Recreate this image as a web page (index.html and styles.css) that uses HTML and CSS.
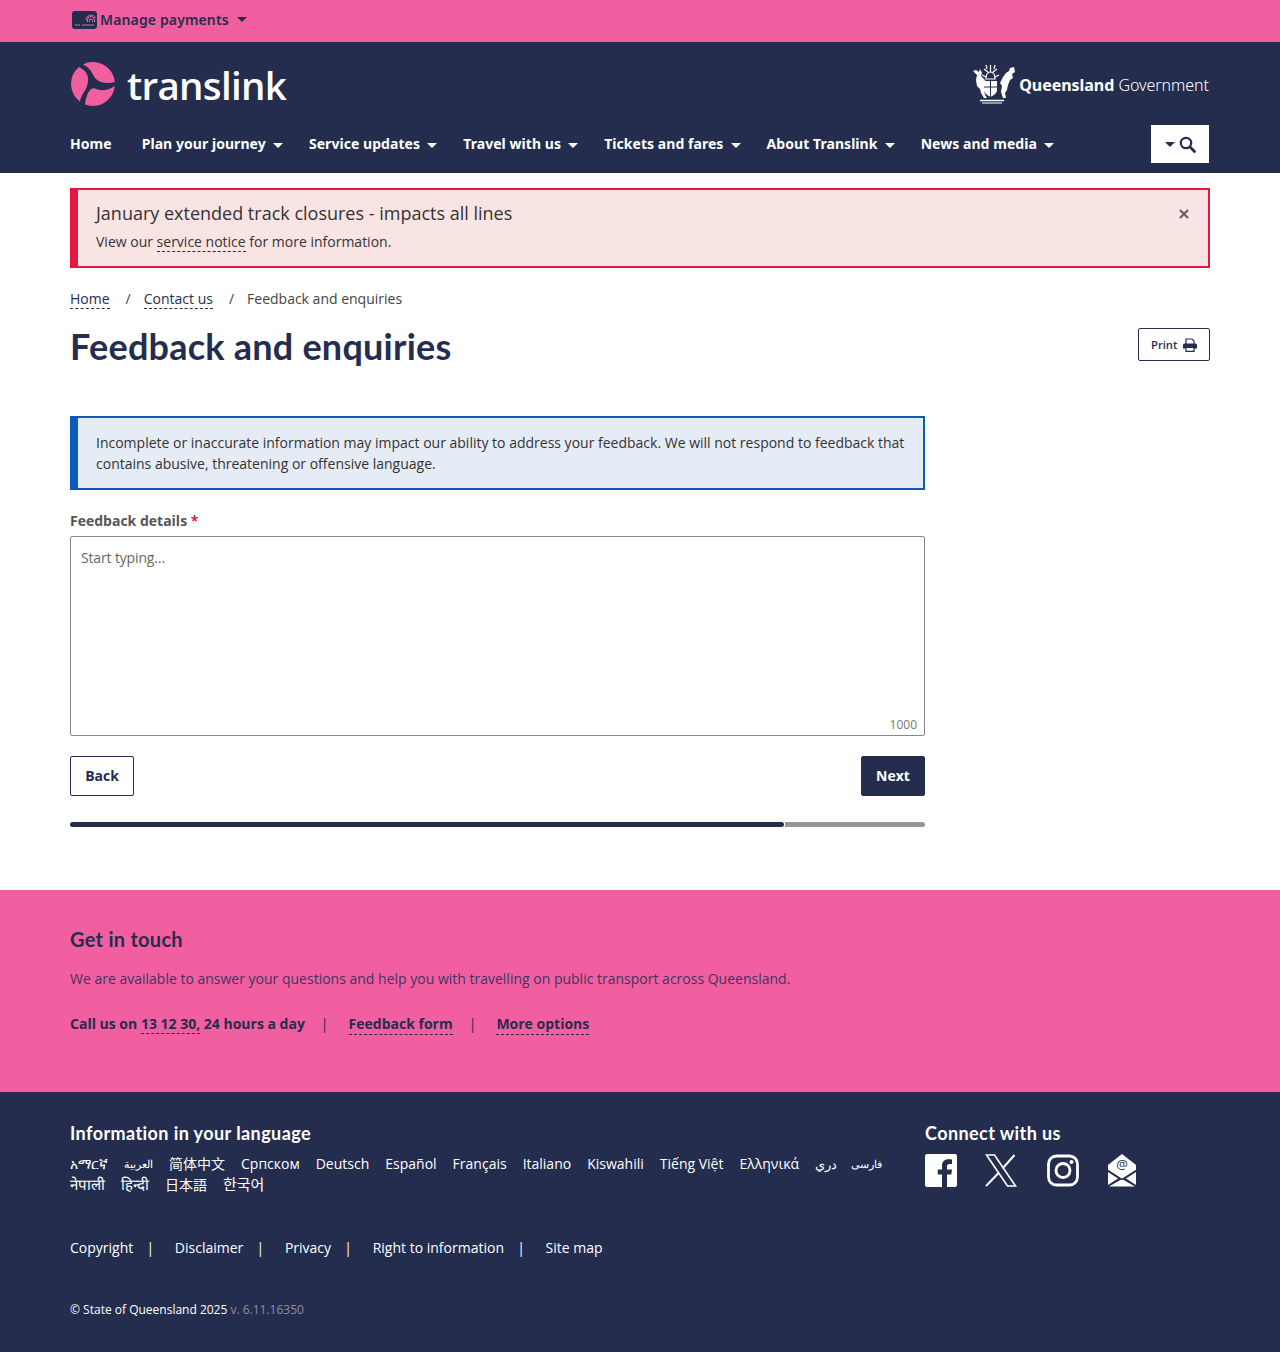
FILE: index.html
```html
<!DOCTYPE html>
<html lang="en">
<head>
    <meta charset="UTF-8">
    <meta name="viewport" content="width=device-width, initial-scale=1.0">
    <title>Feedback and enquiries</title>
    <link rel="stylesheet" href="styles.css">
</head>
<body>

    <!-- Top pink bar -->
    <div class="topbar">
        <div class="container">
            <a class="manage" href="#">
                <svg class="card-icon" width="25" height="18" viewBox="0 0 25 18">
                    <rect x="0" y="0" width="25" height="18" rx="3" fill="#252d4f"/>
                    <rect x="3" y="13.500" width="5" height="1" fill="#f15fa0"/>
                    <rect x="10" y="13.500" width="12" height="1" fill="#f15fa0"/>
                    <path d="M17.500 11V9.500a1.500 1.500 0 0 1 3 0V11M15.500 11V9a3.500 3.500 0 0 1 7 0v2M14 9a5 5 0 0 1 9.500-2" fill="none" stroke="#f15fa0" stroke-width="1"/>
                </svg>
                <span>Manage payments</span>
                <span class="caret"></span>
            </a>
        </div>
    </div>

    <!-- Header and navigation -->
    <header class="header">
        <div class="container">
            <div class="brand-row">
                <a class="logo" href="#">
                    <svg width="44" height="44" viewBox="0 0 44 44" fill="#f15fa0">
                        <path d="M12 2.400A22 22 0 0 1 43.900 20C36 22 29 21 25 17C21 13 21 6 12 2.400Z"/>
                        <path d="M8 5C16 9 19 15 16 24C14 30 10 33 9 39.700A22 22 0 0 1 8 5Z"/>
                        <path d="M43.800 24C36 29 29 29 24 26.500C19 25 15 33 14 42.500A22 22 0 0 0 43.800 24Z"/>
                    </svg>
                    <span class="logo-text">translink</span>
                </a>
                <a class="qld" href="#">
                    <svg width="44" height="42" viewBox="0 0 44 42">
                        <path fill="#fff" d="M1 8l3-1 3 2 1-3 2 4-1 3 3 3 3 4-1 5-2 2 1 5 2 3h-3l-3-5-1-4-3-3-1-6 1-5-3-3z"/>
                        <path fill="#fff" d="M42 4l1 5-3 2 1 4-3 2-2 5-1 5-2 3 1 5h-3l-2-6 1-6-2-3 3-6 3-4 3-2 1-3z"/>
                        <path fill="#fff" d="M12 18h13v9c0 3-3 5-6.500 7C15 32 12 30 12 27z"/>
                        <path d="M18.500 18v16M12 24h13" stroke="#252d4f" stroke-width="1"/>
                        <path fill="none" stroke="#fff" stroke-width="1.200" d="M14 16c0-5 2-7 4.500-7s4.500 2 4.500 7zM18.500 9V2M12 6l4 3M25 6l-4 3M10 12l4 2M27 12l-4 2M14 2l1 4M23 2l-1 4"/>
                        <path d="M8 37.500h24" stroke="#fff" stroke-width="1.500"/>
                        <path d="M10 40h20" stroke="#fff" stroke-width="1"/>
                    </svg>
                    <span class="qld-text"><b>Queensland</b> Government</span>
                </a>
            </div>
            <nav class="nav">
                <ul class="nav-list">
                    <li class="home"><a href="#">Home</a></li>
                    <li><a href="#">Plan your journey <span class="caret"></span></a></li>
                    <li><a href="#">Service updates <span class="caret"></span></a></li>
                    <li><a href="#">Travel with us <span class="caret"></span></a></li>
                    <li><a href="#">Tickets and fares <span class="caret"></span></a></li>
                    <li><a href="#">About Translink <span class="caret"></span></a></li>
                    <li><a href="#">News and media <span class="caret"></span></a></li>
                </ul>
                <button class="search-btn">
                    <span class="caret"></span>
                    <svg width="17" height="17" viewBox="0 0 17 17" fill="none" stroke="#252d4f">
                        <circle cx="7" cy="7" r="5.200" stroke-width="2.200"/>
                        <path d="M11 11l4.500 4.500" stroke-width="2.800" stroke-linecap="round"/>
                    </svg>
                </button>
            </nav>
        </div>
    </header>

    <main class="container main">
        <!-- Alert -->
        <div class="alert">
            <div>
                <p class="alert-title">January extended track closures - impacts all lines</p>
                <p class="alert-text">View our <a href="#">service notice</a> for more information.</p>
            </div>
            <svg class="alert-close" width="10" height="10" viewBox="0 0 10 10" stroke="#6b5f5f" stroke-width="2.200">
                <path d="M1 1l8 8M9 1l-8 8"/>
            </svg>
        </div>

        <ol class="breadcrumb">
            <li><a href="#">Home</a></li>
            <li class="sep">/</li>
            <li><a href="#">Contact us</a></li>
            <li class="sep">/</li>
            <li>Feedback and enquiries</li>
        </ol>

        <div class="title-row">
            <h1>Feedback and enquiries</h1>
            <button class="print-btn">Print
                <svg width="14" height="14" viewBox="0 0 14 14">
                    <path d="M3 6V1h6l2 2v3" fill="none" stroke="#252d4f" stroke-width="1.200"/>
                    <path d="M1.500 5.500h11a1.500 1.500 0 0 1 1.500 1.500v3.500h-14V7a1.500 1.500 0 0 1 1.500-1.500z" fill="#252d4f"/>
                    <path d="M3 9.500h8V13.400H3z" fill="#fff" stroke="#252d4f" stroke-width="1.200"/>
                </svg>
            </button>
        </div>

        <section class="form-col">
            <div class="info">
                Incomplete or inaccurate information may impact our ability to address your feedback. We will not respond to feedback that contains abusive, threatening or offensive language.
            </div>

            <label class="field-label" for="details">Feedback details <span class="req">*</span></label>
            <div class="textarea-wrap">
                <textarea id="details" placeholder="Start typing…"></textarea>
                <span class="counter">1000</span>
            </div>

            <div class="actions">
                <button class="btn btn-back">Back</button>
                <button class="btn btn-next">Next</button>
            </div>

            <div class="progress">
                <div class="progress-done"></div>
                <div class="progress-left"></div>
            </div>
        </section>
    </main>

    <!-- Get in touch -->
    <section class="touch">
        <div class="container">
            <h2>Get in touch</h2>
            <p class="touch-text">We are available to answer your questions and help you with travelling on public transport across Queensland.</p>
            <div class="touch-links">
                <span>Call us on <a href="#">13 12 30,</a> 24 hours a day</span>
                <span class="pipe">|</span>
                <a href="#">Feedback form</a>
                <span class="pipe">|</span>
                <a href="#">More options</a>
            </div>
        </div>
    </section>

    <!-- Footer -->
    <footer class="footer">
        <div class="container">
            <div class="footer-top">
                <div class="lang-col">
                    <h3>Information in your language</h3>
                    <ul class="lang-list">
                        <li>አማርኛ</li>
                        <li class="lang-ar">العربية</li>
                        <li class="lang-zh">简体中文</li>
                        <li>Српском</li>
                        <li>Deutsch</li>
                        <li>Español</li>
                        <li>Français</li>
                        <li>Italiano</li>
                        <li>Kiswahili</li>
                        <li>Tiếng Việt</li>
                        <li>Ελληνικά</li>
                        <li class="lang-prs">دري</li>
                        <li class="lang-fa">فارسی</li>
                        <li class="lang-hi">नेपाली</li>
                        <li class="lang-hi">हिन्दी</li>
                        <li class="lang-ja">日本語</li>
                        <li class="lang-ko">한국어</li>
                    </ul>
                </div>
                <div class="connect-col">
                    <h3>Connect with us</h3>
                    <div class="social">
                        <svg width="32" height="33" viewBox="0 0 32 33">
                            <path fill="#fff" d="M2 0h28a2 2 0 0 1 2 2v29a2 2 0 0 1-2 2h-8V20.500h4.300l.7-5H22v-3c0-1.500.5-2.500 2.500-2.500H27V5.500c-.5 0-2-.2-3.700-.2-3.700 0-6.300 2.300-6.300 6.400v3.800h-4.300v5H17V33H2a2 2 0 0 1-2-2V2a2 2 0 0 1 2-2z"/>
                        </svg>
                        <svg width="32" height="33" viewBox="0 0 32 33" fill="none" stroke="#fff">
                            <path d="M1.500 1h8L30.500 32h-8z" stroke-width="1.600"/>
                            <path d="M29.500 1L17.500 14.500M14 18.500L1 32" stroke-width="2"/>
                        </svg>
                        <svg class="insta" width="32" height="33" viewBox="0 0 32 33" fill="none" stroke="#fff">
                            <rect x="1.500" y="2" width="29" height="29" rx="8" stroke-width="2.800"/>
                            <circle cx="16" cy="16.500" r="7" stroke-width="2.800"/>
                            <circle cx="24.500" cy="8" r="2" fill="#fff" stroke="none"/>
                        </svg>
                        <svg width="30" height="33" viewBox="0 0 30 33">
                            <path fill="#fff" d="M15 0L29 11V16L15 25 1 16V11z"/>
                            <path fill="#fff" d="M1 18L11 24.500 1 31zM29 18L19 24.500 29 31zM2 32.500L15 25 28 32.500z"/>
                            <path d="M1 16.500L15 25.500 29 16.500" fill="none" stroke="#252d4f" stroke-width="1.200"/>
                            <text x="15" y="15" text-anchor="middle" class="mail-at">@</text>
                        </svg>
                    </div>
                </div>
            </div>

            <ul class="legal">
                <li><a href="#">Copyright</a></li>
                <li><a href="#">Disclaimer</a></li>
                <li><a href="#">Privacy</a></li>
                <li><a href="#">Right to information</a></li>
                <li class="last"><a href="#">Site map</a></li>
            </ul>

            <p class="copy">© State of Queensland 2025 <span class="version">v. 6.11.16350</span></p>
        </div>
    </footer>

</body>
</html>
```
FILE: styles.css
```css
* {
    box-sizing: border-box;
}

body {
    font-family: "Open Sans", Arial, sans-serif;
    font-size: 14px;
    color: #252d4f;
    background-color: #fff;
    margin: 0;
}

a {
    color: inherit;
    text-decoration: none;
}

p, ul, ol, h1, h2, h3 {
    margin: 0;
    padding: 0;
}

ul, ol {
    list-style: none;
}

.container {
    width: 1140px;
    margin-left: 70px;
}

.caret {
    display: inline-block;
    width: 0;
    height: 0;
    border-left: 5px solid transparent;
    border-right: 5px solid transparent;
    border-top: 5px solid currentColor;
    vertical-align: middle;
}

/* top bar */
.topbar {
    background-color: #f15fa0;
    height: 42px;
}

.topbar .container {
    padding-left: 2px;
}

.manage {
    display: inline-flex;
    align-items: center;
    height: 39px;
    gap: 3px;
    font-family: "Noto Sans", sans-serif;
    font-size: 14px;
    font-weight: 600;
    letter-spacing: 0.14px;
}

.manage .caret {
    margin-left: 5px;
}

/* header */
.header {
    background-color: #252d4f;
    height: 131px;
    color: #fff;
}

.brand-row {
    display: flex;
    justify-content: space-between;
    align-items: center;
    height: 83px;
}

.logo {
    display: flex;
    align-items: center;
    gap: 12px;
    margin-left: 1px;
}

.logo-text {
    font-family: "Open Sans", sans-serif;
    font-size: 38.5px;
    font-weight: 600;
    letter-spacing: -0.7px;
    line-height: 44px;
    padding-top: 2px;
}

.qld {
    display: flex;
    align-items: center;
    gap: 3px;
    margin-right: 1px;
}

.qld-text {
    font-family: "Noto Sans", sans-serif;
    font-size: 16px;
    font-weight: 300;
    letter-spacing: -0.04px;
    white-space: nowrap;
    padding-top: 2px;
}

.qld-text b {
    font-weight: 700;
}

.nav {
    display: flex;
    justify-content: space-between;
    align-items: flex-start;
}

.nav-list {
    display: flex;
    gap: 26px;
    font-family: "Noto Sans", sans-serif;
    font-size: 14px;
    font-weight: 700;
    letter-spacing: 0.05px;
    line-height: 38px;
}

.nav-list .home {
    margin-right: 4px;
}

.nav-list .caret {
    margin-left: 3.5px;
}

.search-btn {
    width: 58px;
    height: 38px;
    margin-right: 1px;
    background-color: #fff;
    color: #252d4f;
    border: none;
    padding: 0;
    display: flex;
    align-items: center;
    justify-content: center;
    gap: 4px;
}

/* main */
.main {
    padding-top: 15px;
    height: 717px;
}

.alert {
    display: flex;
    justify-content: space-between;
    height: 80px;
    border: 2px solid #e8173f;
    border-left-width: 8px;
    background-color: #f9e4e4;
    padding: 11px 19px 0 18px;
    color: #333;
}

.alert-title {
    font-size: 18px;
    line-height: 24px;
}

.alert-text {
    margin-top: 7px;
    line-height: 20px;
}

.alert-text a {
    border-bottom: 1px dashed #252d4f;
}

.alert-close {
    margin-top: 8px;
}

.breadcrumb {
    display: flex;
    gap: 16px;
    margin-top: 21px;
    line-height: 20px;
    color: #444;
}

.breadcrumb a {
    color: #252d4f;
    border-bottom: 1px dashed #252d4f;
}

.breadcrumb .sep {
    margin-right: -3px;
}

.title-row {
    display: flex;
    justify-content: space-between;
    align-items: flex-start;
    margin-top: 12px;
}

h1 {
    font-family: "Lato", sans-serif;
    font-size: 36px;
    font-weight: 700;
    letter-spacing: 0.23px;
    line-height: 50px;
}

.print-btn {
    display: flex;
    align-items: center;
    gap: 6px;
    margin-top: 7px;
    height: 33px;
    width: 72px;
    padding: 0 0 0 12px;
    font-family: "Open Sans", sans-serif;
    font-size: 11.2px;
    font-weight: 600;
    color: #252d4f;
    background: #fff;
    border: 1px solid #252d4f;
    border-radius: 2px;
}

.form-col {
    width: 855px;
    margin-top: 45px;
}

.info {
    height: 74px;
    border: 2px solid #0a5cb8;
    border-left-width: 8px;
    background-color: #e5ecf6;
    padding: 14px 18px 0 18px;
    line-height: 21px;
    color: #333;
}

.field-label {
    display: block;
    margin-top: 21px;
    line-height: 20px;
    font-weight: 700;
    color: #555;
}

.req {
    color: #e8173f;
}

.textarea-wrap {
    position: relative;
    margin-top: 5px;
    height: 200px;
}

textarea {
    display: block;
    width: 100%;
    height: 100%;
    padding: 11px 10px;
    border: 1px solid #888;
    border-radius: 2px;
    font-family: "Open Sans", sans-serif;
    font-size: 14px;
    line-height: 20px;
    resize: none;
}

textarea::placeholder {
    color: #666;
    opacity: 1;
    letter-spacing: -0.15px;
}

.counter {
    position: absolute;
    right: 8px;
    bottom: 3px;
    font-size: 12px;
    color: #777;
}

.actions {
    display: flex;
    justify-content: space-between;
    margin-top: 20px;
}

.btn {
    height: 40px;
    padding: 0 0 2px;
    font-family: "Open Sans", sans-serif;
    font-size: 14px;
    font-weight: 700;
    border-radius: 2px;
    border: 1px solid #252d4f;
}

.btn-back {
    width: 64px;
    background-color: #fff;
    color: #252d4f;
}

.btn-next {
    width: 64px;
    background-color: #252d4f;
    color: #fff;
}

.progress {
    display: flex;
    gap: 1px;
    margin-top: 26px;
    height: 5px;
}

.progress-done {
    width: 714px;
    background-color: #252d4f;
    border-radius: 3px;
}

.progress-left {
    flex: 1;
    background-color: #979797;
    border-radius: 0 3px 3px 0;
}

/* get in touch */
.touch {
    background-color: #f15fa0;
    height: 202px;
    padding-top: 35px;
}

.touch h2 {
    font-family: "Lato", sans-serif;
    font-size: 20px;
    font-weight: 700;
    letter-spacing: 0.28px;
    line-height: 28px;
}

.touch-text {
    margin-top: 16px;
    line-height: 20px;
    color: #3f3560;
}

.touch-links {
    display: flex;
    gap: 18px;
    margin-top: 25px;
    line-height: 20px;
    font-weight: 700;
}

.touch-links a {
    border-bottom: 1px dashed #252d4f;
}

.touch-links .pipe {
    font-weight: 400;
    margin-left: -2px;
    margin-right: 2px;
}

/* footer */
.footer {
    background-color: #252d4f;
    color: #fff;
    height: 260px;
    padding-top: 29px;
}

.footer-top {
    display: flex;
    height: 104px;
}

.lang-col {
    width: 855px;
}

h3 {
    font-family: "Lato", sans-serif;
    font-size: 18px;
    font-weight: 700;
    letter-spacing: 0.42px;
    line-height: 24px;
}

.lang-list {
    display: flex;
    flex-wrap: wrap;
    column-gap: 16px;
    margin-top: 9px;
    width: 830px;
    line-height: 20px;
}

.lang-list li {
    white-space: nowrap;
}

.lang-list .lang-ar {
    font-size: 11px;
}

.lang-list .lang-prs {
    font-size: 13px;
}

.lang-list .lang-fa {
    font-size: 11px;
    margin-left: -2px;
}

.lang-list .lang-hi {
    font-size: 15px;
}

.lang-zh {
    font-family: "Noto Sans CJK SC", sans-serif;
    margin-top: -1px;
}

.lang-ja {
    font-family: "Noto Sans CJK JP", sans-serif;
}

.lang-list .lang-ko {
    font-family: "Noto Sans CJK KR", sans-serif;
    font-size: 15px;
}

.social {
    display: flex;
    gap: 28px;
    margin-top: 9px;
}

.social .insta {
    margin-left: 2px;
}

.mail-at {
    font-family: "Open Sans", sans-serif;
    font-size: 13px;
    fill: #252d4f;
}

.legal {
    display: flex;
    margin-top: 13px;
    line-height: 20px;
}

.legal li::after {
    content: "|";
    display: inline-block;
    width: 8px;
    text-align: center;
    margin-left: 13px;
    margin-right: 20.6px;
}

.legal li.last::after {
    content: none;
}

.copy {
    margin-top: 42px;
    font-size: 12px;
    line-height: 20px;
}

.version {
    color: #8d8d9c;
}
```
